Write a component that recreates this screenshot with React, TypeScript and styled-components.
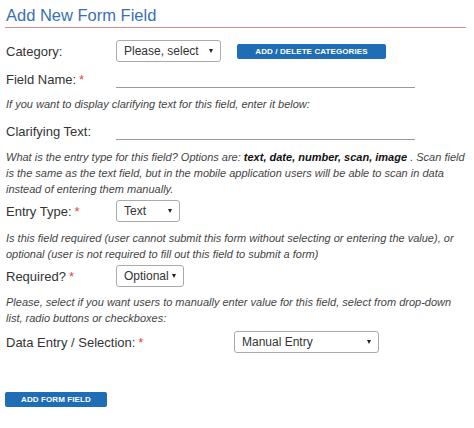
import React from "react";
import styled, { createGlobalStyle } from "styled-components";

const GlobalStyle = createGlobalStyle`
  body {
    margin: 0;
    background: #fff;
    font-family: "Liberation Sans", Arial, sans-serif;
    color: #333;
  }
`;

const Page = styled.div`
  width: 461px;
  padding: 5px 0 0 5px;
`;

const Title = styled.h2`
  margin: 0;
  padding: 0 0 1px 1px;
  font-size: 16.5px;
  line-height: 21px;
  font-weight: normal;
  color: #3a70b3;
  border-bottom: 1px solid #e08a8a;
`;

const Row = styled.div<{ $gap: number }>`
  display: flex;
  align-items: center;
  height: 22px;
  margin-top: ${(p) => p.$gap}px;
  padding-left: 1px;
`;

const Label = styled.label<{ $width: number }>`
  width: ${(p) => p.$width}px;
  flex-shrink: 0;
  font-size: 13px;
  color: #333;
`;

const Star = styled.span`
  color: #e04848;
  margin-left: 3px;
`;

const LineInput = styled.input`
  width: 299px;
  height: 18px;
  box-sizing: border-box;
  border: none;
  border-bottom: 1px solid #9a9a9a;
  outline: none;
  background: transparent;
`;

const Select = styled.div<{ $width: number }>`
  width: ${(p) => p.$width}px;
  height: 22px;
  box-sizing: border-box;
  display: flex;
  align-items: center;
  justify-content: space-between;
  padding: 0 7px 0 7px;
  border: 1px solid #aaa;
  border-radius: 3px;
  font-size: 12px;
  color: #333;
  background: #fff;
`;

const Arrow = styled.span`
  width: 0;
  height: 0;
  border-left: 2.5px solid transparent;
  border-right: 2.5px solid transparent;
  border-top: 4px solid #222;
`;

const BlueButton = styled.button<{ $width: number; $left?: number }>`
  display: block;
  width: ${(p) => p.$width}px;
  height: 15px;
  margin-left: ${(p) => p.$left ?? 0}px;
  padding: 0;
  border: none;
  border-radius: 2px;
  background: #1f6db5;
  color: #fff;
  font-family: "Liberation Sans", Arial, sans-serif;
  font-size: 8px;
  font-weight: bold;
  letter-spacing: 0.1px;
`;

const Help = styled.p<{ $gap: number }>`
  margin: ${(p) => p.$gap}px 0 0 1px;
  font-size: 11px;
  line-height: 16px;
  font-style: italic;
  color: #444;

  b {
    color: #111;
  }
`;

const Footer = styled.div`
  margin-top: 39px;
`;

type SelectProps = { value: string; width: number };

function FakeSelect({ value, width }: SelectProps) {
  return (
    <Select $width={width}>
      <span>{value}</span>
      <Arrow />
    </Select>
  );
}

export default function App() {
  return (
    <Page>
      <GlobalStyle />
      <Title>Add New Form Field</Title>

      <Row $gap={12}>
        <Label $width={110}>Category:</Label>
        <FakeSelect value="Please, select" width={105} />
        <BlueButton $width={149} $left={16}>
          ADD / DELETE CATEGORIES
        </BlueButton>
      </Row>

      <Row $gap={6}>
        <Label $width={110}>
          Field Name:<Star>*</Star>
        </Label>
        <LineInput type="text" />
      </Row>

      <Help $gap={6}>
        If you want to display clarifying text for this field, enter it below:
      </Help>

      <Row $gap={8}>
        <Label $width={110}>Clarifying Text:</Label>
        <LineInput type="text" />
      </Row>

      <Help $gap={7}>
        What is the entry type for this field? Options are:{" "}
        <b>text, date, number, scan, image</b> . Scan field is the same as the
        text field, but in the mobile application users will be able to scan in
        data instead of entering them manually.
      </Help>

      <Row $gap={3}>
        <Label $width={110}>
          Entry Type:<Star>*</Star>
        </Label>
        <FakeSelect value="Text" width={64} />
      </Row>

      <Help $gap={8}>
        Is this field required (user cannot submit this form without selecting
        or entering the value), or optional (user is not required to fill out
        this field to submit a form)
      </Help>

      <Row $gap={3}>
        <Label $width={110}>
          Required?<Star>*</Star>
        </Label>
        <FakeSelect value="Optional" width={68} />
      </Row>

      <Help $gap={7}>
        Please, select if you want users to manually enter value for this field,
        select from drop-down list, radio buttons or checkboxes:
      </Help>

      <Row $gap={5}>
        <Label $width={228}>
          Data Entry / Selection:<Star>*</Star>
        </Label>
        <FakeSelect value="Manual Entry" width={145} />
      </Row>

      <Footer>
        <BlueButton $width={102}>ADD FORM FIELD</BlueButton>
      </Footer>
    </Page>
  );
}
